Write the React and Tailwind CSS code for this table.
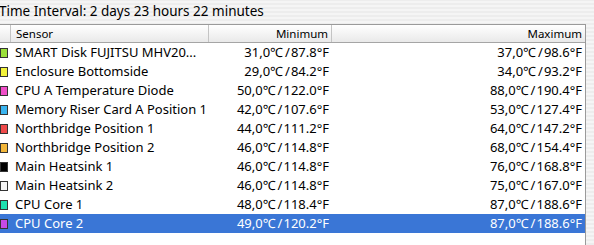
const rows = [
  { name: "SMART Disk FUJITSU MHV20...", color: "bg-[#9be03a]", min: "31,0℃/87.8°F", max: "37,0℃/98.6°F" },
  { name: "Enclosure Bottomside", color: "bg-[#f2f23a]", min: "29,0℃/84.2°F", max: "34,0℃/93.2°F" },
  { name: "CPU A Temperature Diode", color: "bg-[#ef4fc8]", min: "50,0℃/122.0°F", max: "88,0℃/190.4°F" },
  { name: "Memory Riser Card A Position 1", color: "bg-[#3ab4ef]", min: "42,0℃/107.6°F", max: "53,0℃/127.4°F" },
  { name: "Northbridge Position 1", color: "bg-[#ef4a4a]", min: "44,0℃/111.2°F", max: "64,0℃/147.2°F" },
  { name: "Northbridge Position 2", color: "bg-[#f2b63a]", min: "46,0℃/114.8°F", max: "68,0℃/154.4°F" },
  { name: "Main Heatsink 1", color: "bg-[#000000]", min: "46,0℃/114.8°F", max: "76,0℃/168.8°F" },
  { name: "Main Heatsink 2", color: "bg-[#f4f4f4]", min: "46,0℃/114.8°F", max: "75,0℃/167.0°F" },
  { name: "CPU Core 1", color: "bg-[#1fe0b0]", min: "48,0℃/118.4°F", max: "87,0℃/188.6°F" },
  { name: "CPU Core 2", color: "bg-[#c54ae6]", min: "49,0℃/120.2°F", max: "87,0℃/188.6°F", selected: true },
];

// value like 31,0℃/87.8°F, slash gets a little air on the left as in the reference
function Temp({ v }) {
  const [c, f] = v.split("/");
  return (
    <span>
      {c}
      <span className="ml-[2px] mr-[1px]">/</span>
      {f}
    </span>
  );
}

function Row({ row }) {
  const sel = row.selected;
  return (
    <div
      className={
        "grid grid-cols-[11px_198px_123px_253px] h-[19px] items-center text-[13px] " +
        (sel ? "bg-[#3a76d6] text-white" : "bg-white text-black")
      }
    >
      <div className="flex items-center h-full">
        <div className={"w-[8px] h-[10px] border border-[#333] " + row.color}></div>
      </div>
      <div className="pl-[4px] whitespace-nowrap overflow-hidden">{row.name}</div>
      <div className="text-right pr-[3px] whitespace-nowrap">
        <Temp v={row.min} />
      </div>
      <div className="text-right pr-[3px] whitespace-nowrap">
        <Temp v={row.max} />
      </div>
    </div>
  );
}

export default function App() {
  return (
    <div
      className="w-[594px] h-[245px] overflow-hidden bg-[repeating-linear-gradient(0deg,#ededed_0px,#ededed_2px,#f5f5f5_2px,#f5f5f5_4px)]"
      style={{ fontFamily: '"Noto Sans", "DejaVu Sans", sans-serif' }}
    >
      <div className="h-[24px] pt-[2px] text-[13.5px] leading-[18px] text-black whitespace-nowrap -ml-[1px]">
        Time Interval: 2 days 23 hours 22 minutes
      </div>
      <div className="w-[586px] h-[221px] bg-white border-t border-r border-[#9a9a9a] flex flex-col">
        <div className="grid grid-cols-[11px_198px_123px_253px] h-[18px] items-center text-[11.5px] text-black bg-[linear-gradient(#ffffff,#e9e9e9)] border-b border-[#a5a5a5]">
          <div className="h-full border-r border-[#c4c4c4]"></div>
          <div className="h-full flex items-center pl-[5px] border-r border-[#c4c4c4]">Sensor</div>
          <div className="h-full flex items-center justify-end pr-[3px] border-r border-[#c4c4c4]">Minimum</div>
          <div className="h-full flex items-center justify-end pr-[3px]">Maximum</div>
        </div>
        {rows.map((r, i) => (
          <Row key={i} row={r} />
        ))}
      </div>
    </div>
  );
}
